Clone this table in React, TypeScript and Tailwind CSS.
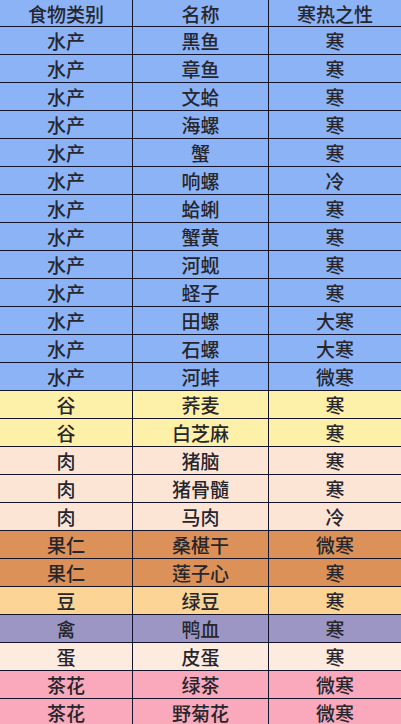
import React from 'react';

interface FoodRow {
  category: string;
  name: string;
  nature: string;
  bg: string;
}

const BLUE = 'bg-[#8cb3f6]';
const YELLOW = 'bg-[#fdf0a8]';
const PEACH = 'bg-[#fde5d6]';
const ORANGE = 'bg-[#dc9159]';
const SAND = 'bg-[#fcd596]';
const PURPLE = 'bg-[#9c96c4]';
const CREAM = 'bg-[#fdebdf]';
const PINK = 'bg-[#faa9bd]';

const rows: FoodRow[] = [
  { category: '水产', name: '黑鱼', nature: '寒', bg: BLUE },
  { category: '水产', name: '章鱼', nature: '寒', bg: BLUE },
  { category: '水产', name: '文蛤', nature: '寒', bg: BLUE },
  { category: '水产', name: '海螺', nature: '寒', bg: BLUE },
  { category: '水产', name: '蟹', nature: '寒', bg: BLUE },
  { category: '水产', name: '响螺', nature: '冷', bg: BLUE },
  { category: '水产', name: '蛤蜊', nature: '寒', bg: BLUE },
  { category: '水产', name: '蟹黄', nature: '寒', bg: BLUE },
  { category: '水产', name: '河蚬', nature: '寒', bg: BLUE },
  { category: '水产', name: '蛏子', nature: '寒', bg: BLUE },
  { category: '水产', name: '田螺', nature: '大寒', bg: BLUE },
  { category: '水产', name: '石螺', nature: '大寒', bg: BLUE },
  { category: '水产', name: '河蚌', nature: '微寒', bg: BLUE },
  { category: '谷', name: '荞麦', nature: '寒', bg: YELLOW },
  { category: '谷', name: '白芝麻', nature: '寒', bg: YELLOW },
  { category: '肉', name: '猪脑', nature: '寒', bg: PEACH },
  { category: '肉', name: '猪骨髓', nature: '寒', bg: PEACH },
  { category: '肉', name: '马肉', nature: '冷', bg: PEACH },
  { category: '果仁', name: '桑椹干', nature: '微寒', bg: ORANGE },
  { category: '果仁', name: '莲子心', nature: '寒', bg: ORANGE },
  { category: '豆', name: '绿豆', nature: '寒', bg: SAND },
  { category: '禽', name: '鸭血', nature: '寒', bg: PURPLE },
  { category: '蛋', name: '皮蛋', nature: '寒', bg: CREAM },
  { category: '茶花', name: '绿茶', nature: '微寒', bg: PINK },
  { category: '茶花', name: '野菊花', nature: '微寒', bg: PINK },
];

const Row: React.FC<{ cells: string[]; bg: string; header?: boolean }> = ({ cells, bg, header }) => (
  <div className={`flex border-b border-[#14142a] ${bg} ${header ? 'h-[27px]' : 'h-[28px]'}`}>
    <div className="w-[133px] shrink-0 border-r border-[#14142a] flex items-center justify-center">{cells[0]}</div>
    <div className="w-[136px] shrink-0 border-r border-[#14142a] flex items-center justify-center">{cells[1]}</div>
    <div className="flex-1 flex items-center justify-center">{cells[2]}</div>
  </div>
);

const App: React.FC = () => {
  return (
    <div
      className="w-[401px] h-[724px] overflow-hidden bg-white text-[19px] leading-none font-medium text-[#26262c]"
      style={{ fontFamily: '"Noto Sans CJK SC", "Noto Sans", sans-serif' }}
    >
      {/* Header */}
      <Row cells={['食物类别', '名称', '寒热之性']} bg={BLUE} header />

      {/* Body */}
      {rows.map((r, i) => (
        <Row key={i} cells={[r.category, r.name, r.nature]} bg={r.bg} />
      ))}
    </div>
  );
};

export default App;
